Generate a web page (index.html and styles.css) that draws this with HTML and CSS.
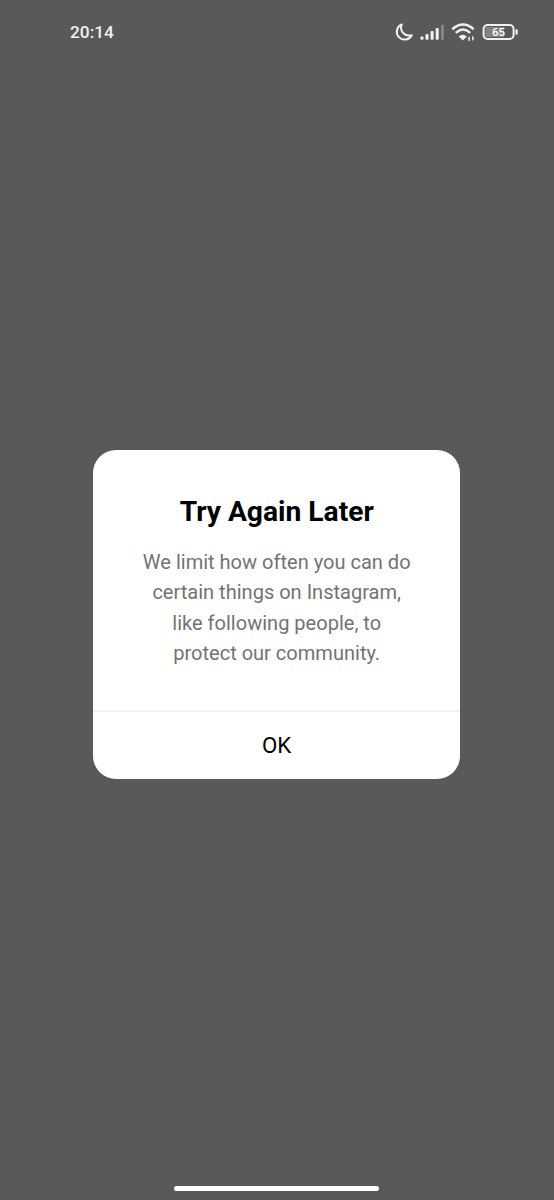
FILE: index.html
```html
<!DOCTYPE html>
<html lang="en">
<head>
<meta charset="utf-8">
<title>Try Again Later</title>
<link rel="stylesheet" href="styles.css">
</head>
<body>
<div class="screen">
  <header class="status-bar">
    <span class="clock">20:14</span>
    <svg class="status-icons" width="130" height="24" viewBox="390 20 130 24" aria-hidden="true">
      <path class="stroke moon" d="M401.7 24.4A7.9 7.9 0 1 0 411.8 35.2C404.6 37 399.2 31 401.7 24.4Z"/>
      <g class="fill">
        <rect x="420.5" y="36.5" width="3" height="3.3" rx="1"/>
        <rect x="425.5" y="34" width="3" height="5.8" rx="1"/>
        <rect x="430.6" y="31" width="3" height="8.8" rx="1"/>
        <rect x="435.7" y="28" width="3" height="11.8" rx="1"/>
        <rect class="dim" x="441" y="24.7" width="3" height="15.1" rx="1"/>
        <path d="M458.7 36.5Q462.8 33.2 466.9 36.5L462.8 40.5Z"/>
        <path d="M469.8 36.2L467.4 38.9H468.5V41H469.9ZM472.3 41L474.5 38.3H473.4V36.2H472Z"/>
        <rect x="515.5" y="29.3" width="2.2" height="5.4" rx="1"/>
      </g>
      <path class="wave" d="M452.3 29.2Q463 19.8 473.7 29.2M455.8 32.8Q463 26.2 470.2 32.8"/>
      <rect class="dim" x="485.5" y="27" width="18.5" height="10"/>
      <rect class="stroke" x="483.6" y="25" width="30" height="14" rx="4"/>
      <text class="charge" x="498.5" y="36.2">65</text>
    </svg>
  </header>
  <main class="stage">
    <section class="dialog" role="dialog" aria-labelledby="title">
      <div class="content">
        <h1 class="title" id="title">Try Again Later</h1>
        <p class="message">We limit how often you can do<br>certain things on Instagram,<br>like following people, to<br>protect our community.</p>
      </div>
      <button class="confirm" type="button">OK</button>
    </section>
  </main>
  <footer class="gesture-area"><div class="gesture-bar"></div></footer>
</div>
</body>
</html>
```
FILE: styles.css
```css
* { box-sizing: border-box; }
body { margin: 0; background: #595959; font-family: Roboto, sans-serif; }
.screen { display: flex; flex-direction: column; height: 1200px; overflow: hidden; }
.status-bar { display: flex; justify-content: space-between; align-items: center; height: 64px; padding: 0 34px 0 70px; }
.clock { color: #f1f1f1; font-size: 17.3px; font-weight: 500; line-height: 24px; }
.status-icons { display: block; }
.fill { fill: #f1f1f1; }
.stroke { fill: none; stroke: #f1f1f1; stroke-width: 2; stroke-linejoin: round; }
.wave { fill: none; stroke: #f1f1f1; stroke-width: 2.5; }
.dim { fill: #858585; }
.charge { fill: #fff; font-size: 11.5px; font-weight: 500; text-anchor: middle; }
.stage { flex: 1; padding: 385.5px 94px 0 93.4px; }
.dialog { height: 329.3px; display: flex; flex-direction: column; overflow: hidden; border-radius: 23px; background: #fff; text-align: center; }
.content { flex: 1; padding-top: 44.5px; }
.title { margin: 0 0 17.2px; color: #000; font-size: 28.2px; font-weight: 700; line-height: 36px; }
.message { margin: 0; color: #737373; font-size: 20.05px; line-height: 30.2px; }
.confirm { height: 69px; padding: 0; border: 0; border-top: 2px solid #f2f2f2; background: transparent; color: #000; font-family: inherit; font-size: 22.3px; line-height: 30px; }
.gesture-area { display: flex; justify-content: center; height: 14px; padding-right: 1px; }
.gesture-bar { width: 205px; height: 5px; border-radius: 3px; background: #fff; }
```
